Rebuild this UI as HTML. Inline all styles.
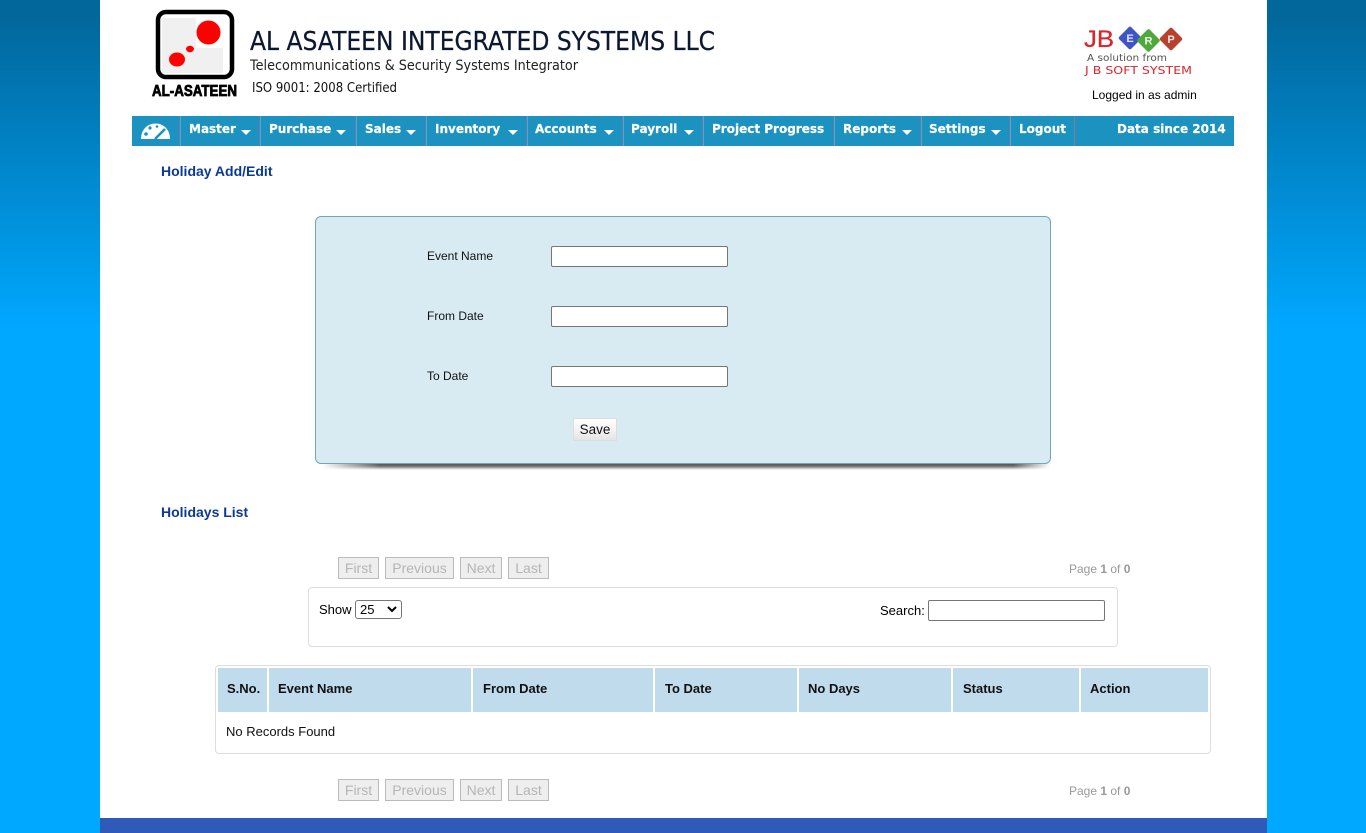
<!DOCTYPE html>
<html><head><meta charset="utf-8"><title>Holiday Add/Edit</title>
<style>
*{box-sizing:border-box}
html,body{margin:0;padding:0;width:1366px;height:833px;overflow:hidden}
body{background:linear-gradient(#02689c 0,#02689c 20px,#00a8ff 330px,#00a8ff 100%);font-family:"Liberation Sans",Arial,sans-serif;font-size:12px;color:#000;position:relative}
.abs,.m,.sep,.l,.i,.pg,.th,.pi{position:absolute}
#page{position:absolute;left:100px;top:0;width:1167px;height:833px;background:#fff}
#foot{position:absolute;left:100px;top:818px;width:1167px;height:15px;background:#2f5ab8}
#nav{position:absolute;left:132px;top:116px;width:1102px;height:30px;background:#1b92c0}
.m{top:0;height:27px;line-height:27px;font-family:"DejaVu Sans",Verdana,sans-serif;font-weight:bold;font-size:12px;color:#fff;white-space:nowrap;letter-spacing:0;-webkit-text-stroke:.2px #fff}
.sep{top:0;width:1px;height:30px;background:#6578ad;box-shadow:1px 0 0 #4fa9cc}
.car{position:absolute;top:14px;width:0;height:0;border-left:5.500px solid transparent;border-right:5.500px solid transparent;border-top:5px solid #fff}
.h{position:absolute;left:161px;font-size:14px;font-weight:bold;color:#0b3a96;white-space:nowrap}
#box{position:absolute;left:315px;top:216px;width:736px;height:248px;background:#d8ebf3;border:1px solid #6fa5bf;border-radius:6px}
#sh{position:absolute;left:322px;top:463px;width:728px;height:7px;background:linear-gradient(90deg,#fff,rgba(255,255,255,0) 8%,rgba(255,255,255,0) 95%,#fff),linear-gradient(#444,#777 50%,#ddd 85%,#fff)}
.l{left:427px;font-size:12px;white-space:nowrap;color:#111}
.i{left:551px;width:177px;height:21px;background:#fff;border:1px solid #767676;border-radius:2px}
#save{position:absolute;left:573px;top:418px;width:44px;height:23px;border:1px solid #ddd;background:linear-gradient(#fff,#eee 70%,#e4e4e4);font-size:13.500px;line-height:21px;text-align:center;color:#111}
.pg{height:22px;background:#eee;border:1px solid #bbb;color:#b5b5b5;font-size:14px;line-height:20px;text-align:center}
.pi{left:1069px;font-size:12px;color:#999;white-space:nowrap}
#tools{position:absolute;left:308px;top:587px;width:810px;height:60px;border:1px solid #ddd;border-radius:4px;background:#fff}
#wrap{position:absolute;left:215px;top:665px;width:996px;height:89px;border:1px solid #ddd;border-radius:4px;background:#fff}
.th{top:668px;height:44px;background:#c0dbec;font-weight:bold;font-size:13px;line-height:42px;color:#111;white-space:nowrap;padding-left:9px}
</style></head>
<body>
<div id="page"></div>

<svg class="abs" style="left:145px;top:5px" width="580" height="100" viewBox="145 5 580 100">
<rect x="158" y="12" width="74" height="65" rx="8" fill="#fff" stroke="#000" stroke-width="4.500"/>
<path d="M162 18h34v30h27v25h-61z" fill="#f0f0f0"/>
<circle cx="208.500" cy="32.500" r="12" fill="#f00"/>
<ellipse cx="190" cy="49" rx="4" ry="3.200" fill="#f00"/>
<ellipse cx="177" cy="59.500" rx="8" ry="7" fill="#f00"/>
<text x="152" y="96" font-family="Liberation Sans" font-weight="bold" font-size="15.500" textLength="85" lengthAdjust="spacingAndGlyphs" stroke="#000" stroke-width=".8">AL-ASATEEN</text>
<text x="250" y="50" font-family="DejaVu Sans" font-size="26" fill="#0c1830" stroke="#0c1830" stroke-width=".25" textLength="465" lengthAdjust="spacingAndGlyphs">AL ASATEEN INTEGRATED SYSTEMS LLC</text>
<text x="250" y="70" font-family="DejaVu Sans" font-size="14" fill="#222" textLength="328" lengthAdjust="spacingAndGlyphs">Telecommunications &amp; Security Systems Integrator</text>
<text x="252" y="92" font-family="DejaVu Sans" font-size="13.500" fill="#111" textLength="145" lengthAdjust="spacingAndGlyphs">ISO 9001: 2008 Certified</text>
</svg>

<svg class="abs" style="left:1080px;top:20px" width="115" height="60" viewBox="1080 20 115 60">
<text x="1084" y="47" font-family="Liberation Sans" font-size="24" fill="#d8262c" stroke="#d8262c" stroke-width=".3" textLength="30" lengthAdjust="spacingAndGlyphs">JB</text>
<rect x="1121.500" y="29.500" width="17" height="17" rx="2" transform="rotate(45 1130 38)" fill="#3f55c4"/>
<rect x="1140" y="32" width="17" height="17" rx="2" transform="rotate(45 1148.500 40.500)" fill="#4fa83c"/>
<rect x="1162.500" y="30.500" width="17" height="17" rx="2" transform="rotate(45 1171 39)" fill="#b8402f"/>
<text x="1130" y="42" text-anchor="middle" font-family="Liberation Sans" font-weight="bold" font-size="11" fill="#dfe6ff">E</text>
<text x="1148.500" y="44.500" text-anchor="middle" font-family="Liberation Sans" font-weight="bold" font-size="11" fill="#eaffe6">R</text>
<text x="1171" y="43" text-anchor="middle" font-family="Liberation Sans" font-weight="bold" font-size="11" fill="#ffe6e0">P</text>
<text x="1087" y="61" font-family="DejaVu Sans" font-size="10" fill="#555" textLength="80" lengthAdjust="spacingAndGlyphs">A solution from</text>
<text x="1085" y="74" font-family="DejaVu Sans" font-size="11" fill="#d8262c" textLength="107" lengthAdjust="spacingAndGlyphs">J B SOFT SYSTEM</text>
</svg>
<div class="abs" style="left:1092px;top:88px;font-size:12px;white-space:nowrap">Logged in as admin</div>

<div id="nav">
<svg class="abs" style="left:8px;top:6px" width="31" height="18" viewBox="0 0 31 18"><path d="M1 17C1 8 7 1.500 15.500 1.500S30 8 30 17z" fill="#fff"/><circle cx="6" cy="12" r="1.800" fill="#1b92c0"/><circle cx="10" cy="6" r="1.600" fill="#1b92c0"/><circle cx="17" cy="4.500" r="1.300" fill="#1b92c0"/><path d="M15 17L25 7" stroke="#1b92c0" stroke-width="2.500"/></svg>
<div class="sep" style="left:47px"></div>
<div class="m" style="left:57px">Master</div><div class="car" style="left:109px"></div>
<div class="sep" style="left:127px"></div>
<div class="m" style="left:137px">Purchase</div><div class="car" style="left:204px"></div>
<div class="sep" style="left:223px"></div>
<div class="m" style="left:233px">Sales</div><div class="car" style="left:274px"></div>
<div class="sep" style="left:293px"></div>
<div class="m" style="left:303px">Inventory</div><div class="car" style="left:376px"></div>
<div class="sep" style="left:394px"></div>
<div class="m" style="left:403px">Accounts</div><div class="car" style="left:472px"></div>
<div class="sep" style="left:490px"></div>
<div class="m" style="left:499px">Payroll</div><div class="car" style="left:552px"></div>
<div class="sep" style="left:570px"></div>
<div class="m" style="left:580px">Project Progress</div>
<div class="sep" style="left:701px"></div>
<div class="m" style="left:711px">Reports</div><div class="car" style="left:770px"></div>
<div class="sep" style="left:788px"></div>
<div class="m" style="left:797px">Settings</div><div class="car" style="left:859px"></div>
<div class="sep" style="left:877px"></div>
<div class="m" style="left:887px">Logout</div>
<div class="sep" style="left:942px;background:#8a7a9a;box-shadow:none"></div>
<div class="m" style="left:985px">Data since 2014</div>
</div>

<div class="h" style="top:163px">Holiday Add/Edit</div>
<div id="sh"></div>
<div id="box"></div>
<div class="l" style="top:249px">Event Name</div><div class="i" style="top:246px"></div>
<div class="l" style="top:309px">From Date</div><div class="i" style="top:306px"></div>
<div class="l" style="top:369px">To Date</div><div class="i" style="top:366px"></div>
<div id="save">Save</div>

<div class="h" style="top:504px">Holidays List</div>

<div class="pg" style="left:338px;top:557px;width:41px">First</div>
<div class="pg" style="left:385px;top:557px;width:69px">Previous</div>
<div class="pg" style="left:460px;top:557px;width:42px">Next</div>
<div class="pg" style="left:508px;top:557px;width:41px">Last</div>
<div class="pi" style="top:562px">Page <b>1</b> of <b>0</b></div>

<div id="tools"></div>
<div class="abs" style="left:319px;top:602px;font-size:13px">Show</div>
<svg class="abs" style="left:355px;top:600px" width="47" height="19"><rect x=".5" y=".5" width="46" height="18" rx="2.500" fill="#fff" stroke="#767676"/><text x="5" y="14" font-family="Liberation Sans" font-size="13" fill="#000">25</text><path d="M33 7l4 4 4-4" fill="none" stroke="#000" stroke-width="2"/></svg>
<div class="abs" style="left:880px;top:603px;font-size:13px">Search:</div>
<div class="i" style="left:928px;top:600px;width:177px"></div>

<div id="wrap"></div>
<div class="th" style="left:218px;width:49px">S.No.</div>
<div class="th" style="left:269px;width:202px">Event Name</div>
<div class="th" style="left:473px;width:180px;padding-left:10px">From Date</div>
<div class="th" style="left:655px;width:142px;padding-left:10px">To Date</div>
<div class="th" style="left:799px;width:152px">No Days</div>
<div class="th" style="left:953px;width:126px;padding-left:10px">Status</div>
<div class="th" style="left:1081px;width:127px">Action</div>
<div class="abs" style="left:226px;top:724px;font-size:13px;color:#111">No Records Found</div>

<div class="pg" style="left:338px;top:779px;width:41px">First</div>
<div class="pg" style="left:385px;top:779px;width:69px">Previous</div>
<div class="pg" style="left:460px;top:779px;width:42px">Next</div>
<div class="pg" style="left:508px;top:779px;width:41px">Last</div>
<div class="pi" style="top:784px">Page <b>1</b> of <b>0</b></div>

<div id="foot"></div>
</body></html>
